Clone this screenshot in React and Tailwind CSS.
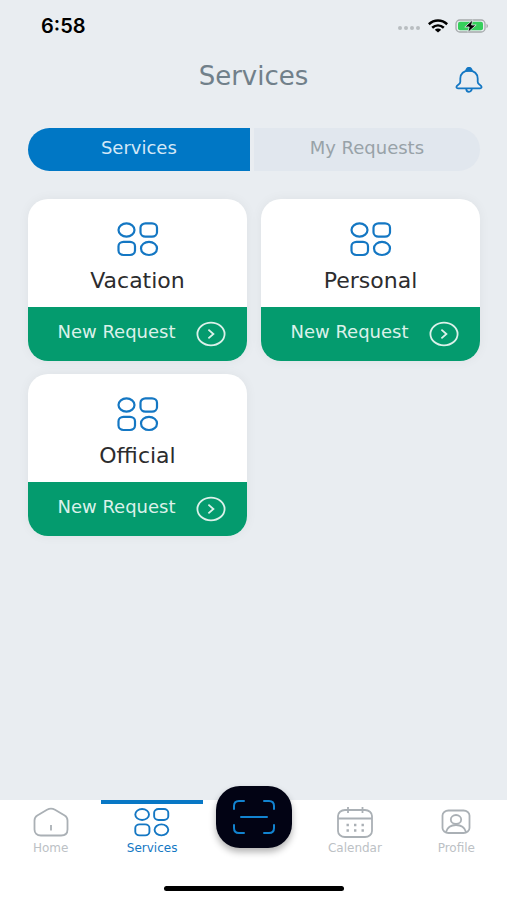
import React, { useState } from 'react';

const services = [
  { id: 'vacation', name: 'Vacation' },
  { id: 'personal', name: 'Personal' },
  { id: 'official', name: 'Official' }
];

const tabs = [
  { id: 'services', name: 'Services', shape: 'rounded-l-[26px]' },
  { id: 'requests', name: 'My Requests', shape: 'rounded-r-[26px]' }
];

const GridIcon = ({ className }) => (
  <svg viewBox="0 0 42 36" preserveAspectRatio="none" className={className} fill="none" stroke="currentColor" strokeWidth="2.2" aria-hidden="true">
    <ellipse cx="9.5" cy="9" rx="8" ry="6.6" />
    <rect x="23.5" y="2.4" width="16.5" height="13.2" rx="5" ry="4.4" />
    <rect x="1.5" y="20.8" width="16.5" height="13.2" rx="5" ry="4.4" />
    <ellipse cx="32" cy="27.4" rx="8" ry="6.6" />
  </svg>
);

const HomeIcon = () => (
  <svg viewBox="0 0 36 30" className="w-9 h-[30px]" fill="none" stroke="currentColor" strokeWidth="1.8" aria-hidden="true">
    <path d="M1.5 13.500c0-2 .8-3.800 2.800-5L14 2.700c2.800-1.600 5.200-1.600 8 0l9.700 5.800c2 1.200 2.800 3 2.800 5v9c0 3.600-2.400 6-6.400 6H7.900c-4 0-6.400-2.400-6.400-6z" />
    <path d="M18 18v5.500" />
  </svg>
);

const CalendarIcon = () => (
  <svg viewBox="0 0 36 32" className="w-9 h-8" fill="none" stroke="currentColor" strokeWidth="1.8" aria-hidden="true">
    <rect x="1" y="4" width="34" height="27" rx="7" ry="6" />
    <path d="M1 12.5h34M11 1v6M25.5 1v6" />
    <path d="M9.500 19h2.400M17 19h2.400M24.500 19h2.400M9.500 24.500h2.400M17 24.500h2.400M24.500 24.500h2.400" strokeWidth="2.4" />
  </svg>
);

const ProfileIcon = () => (
  <svg viewBox="0 0 30 26" className="w-[30px] h-[26px]" fill="none" stroke="currentColor" strokeWidth="1.8" aria-hidden="true">
    <rect x="1.5" y="1.5" width="27" height="22.5" rx="6" ry="5" />
    <ellipse cx="15" cy="10.5" rx="5.2" ry="4.5" />
    <path d="M5 23c1.500-5 5-7 10-7s8.500 2 10 7" />
  </svg>
);

const BellIcon = () => (
  <svg viewBox="0 0 28 26" className="w-7 h-[26px]" fill="none" stroke="currentColor" strokeWidth="1.8" strokeLinejoin="round" aria-hidden="true">
    <path d="M14 3.500c-5.200 0-8.700 3.400-8.700 8v3.200c0 1.200-.6 2-1.700 2.700C1 19 .6 21.300 3.200 21.300h21.600c2.600 0 2.200-2.300-.4-3.900-1.100-.7-1.700-1.500-1.700-2.700v-3.200c0-4.600-3.500-8-8.700-8z" />
    <path d="M11.200 21.500c0 4.400 5.600 4.400 5.600 0" />
    <path d="M11.200 3.800c0-4 5.600-4 5.600 0z" fill="currentColor" />
  </svg>
);

const ArrowIcon = () => (
  <svg viewBox="0 0 30 26" className="w-[30px] h-[26px] shrink-0" fill="none" stroke="currentColor" strokeWidth="1.8" aria-hidden="true">
    <ellipse cx="15" cy="13" rx="13.6" ry="11.4" />
    <path d="M12.400 8.600l5 4.400-5 4.400" />
  </svg>
);

const ScanIcon = () => (
  <svg viewBox="0 0 44 36" className="w-11 h-9" fill="none" stroke="currentColor" strokeWidth="2" strokeLinecap="round" aria-hidden="true">
    <path d="M2 10V7c0-3 2-5 5-5h5M32 2h5c3 0 5 2 5 5v3M42 26v3c0 3-2 5-5 5h-5M12 34H7c-3 0-5-2-5-5v-3M9 18h26" />
  </svg>
);

const StatusBar = () => (
  <div className="flex items-center justify-between h-[52px] pl-[41px] pr-[18px]">
    <span className="font-['Inter',sans-serif] text-xl font-semibold text-black">6:58</span>
    <div className="flex items-center gap-[7px]">
      <svg viewBox="0 0 24 8" className="w-6 h-2 text-[#b9bdc1]" fill="currentColor" aria-hidden="true">
        <circle cx="3" cy="6" r="2" />
        <circle cx="9" cy="6" r="2" />
        <circle cx="15" cy="6" r="2" />
        <circle cx="21" cy="6" r="2" />
      </svg>
      <svg viewBox="0 0 20 14" className="w-5 h-3.5 text-black" fill="none" stroke="currentColor" strokeWidth="2.6" aria-hidden="true">
        <path d="M.8 5.200c5.300-5 13.100-5 18.400 0M4.200 8.800c3.500-3.100 8.100-3.100 11.600 0" />
        <path d="M6.800 10.800c2-1.600 4.400-1.600 6.400 0L10 13.600z" fill="currentColor" stroke="none" />
      </svg>
      <svg viewBox="0 0 34 14" className="w-[34px] h-3.5" aria-hidden="true">
        <rect x="1" y="1" width="29" height="12" rx="3.8" fill="none" stroke="#a5a9ab" strokeWidth="1.3" />
        <rect x="3" y="2.8" width="25" height="8.4" rx="2" fill="#35cf5b" />
        <path d="M31.500 4.800c2 .8 2 3.600 0 4.400z" fill="#a5a9ab" />
        <path d="M17.800 .8L9.800 8h4.400l-1.400 5.400L21.200 6h-4.600z" fill="#000" stroke="#e9edf1" strokeWidth=".8" />
      </svg>
    </div>
  </div>
);

const ServiceCard = ({ service }) => (
  <article className="overflow-hidden rounded-[20px] bg-white shadow-[0_0_12px_rgba(0,0,0,0.05)]">
    <div className="flex flex-col items-center h-[108px] pt-[22px]">
      <GridIcon className="w-[42px] h-9 text-[#1477c3]" />
      <h2 className="mt-2 text-[22px] leading-8 text-[#2c2c2e]">{service.name}</h2>
    </div>
    <button type="button" className="flex items-center justify-center gap-5 w-full h-[54px] pl-2 bg-[#049b6e] text-[#dcf1ea]">
      <span className="pb-1 text-lg leading-6">New Request</span>
      <ArrowIcon />
    </button>
  </article>
);

const NavItem = ({ label, active, children }) => (
  <a
    href="#"
    aria-current={active ? 'page' : undefined}
    className={`flex flex-1 flex-col items-center border-t-4 ${active ? 'border-[#0877c5] text-[#1477c3]' : 'border-transparent text-[#aab0b5]'}`}
  >
    <span className="flex items-center justify-center h-9">{children}</span>
    <span className={`text-xs leading-4 ${active ? '' : 'text-[#bcc1c5]'}`}>{label}</span>
  </a>
);

export default function App() {
  const [activeTab, setActiveTab] = useState('services');

  return (
    <div className="flex flex-col min-h-screen bg-[#e9edf1] font-['DejaVu_Sans',sans-serif] font-normal">
      <StatusBar />

      <header className="grid grid-cols-[1fr_auto_1fr] items-center h-12 px-6">
        <h1 className="col-start-2 text-[26px] leading-8 text-[#71808a]">Services</h1>
        <button type="button" aria-label="Notifications" className="justify-self-end pt-2 text-[#1477c3]">
          <BellIcon />
        </button>
      </header>

      <main className="flex-1 pl-7 pr-[27px] pt-7">
        <div role="tablist" className="grid grid-cols-[49fr_50fr] gap-1">
          {tabs.map((tab) => (
            <button
              key={tab.id}
              type="button"
              role="tab"
              aria-selected={activeTab === tab.id}
              onClick={() => setActiveTab(tab.id)}
              className={`h-[43px] pb-1 text-lg leading-6 ${tab.shape} ${activeTab === tab.id ? 'bg-[#0077c5] text-[#d3e8f7]' : 'bg-[#e1e7ee] text-[#98a2a8]'}`}
            >
              {tab.name}
            </button>
          ))}
        </div>

        {/* Service cards */}
        <div className="grid grid-cols-2 gap-x-3.5 gap-y-[13px] mt-7">
          {services.map((service) => (
            <ServiceCard key={service.id} service={service} />
          ))}
        </div>
      </main>

      <footer className="h-[100px] bg-white">
        <nav className="flex">
          <NavItem label="Home"><HomeIcon /></NavItem>
          <NavItem label="Services" active><GridIcon className="w-9 h-[30px]" /></NavItem>
          <div className="flex flex-1 justify-center">
            <button
              type="button"
              aria-label="Scan"
              className="flex items-center justify-center w-[76px] h-[62px] -mt-3.5 rounded-[24px] bg-[#020314] text-[#1283d0] shadow-[0_4px_7px_rgba(0,0,0,0.3)]"
            >
              <ScanIcon />
            </button>
          </div>
          <NavItem label="Calendar"><CalendarIcon /></NavItem>
          <NavItem label="Profile"><ProfileIcon /></NavItem>
        </nav>
        <div className="w-[180px] h-[5px] mt-[30px] mx-auto rounded-full bg-black" />
      </footer>
    </div>
  );
}
